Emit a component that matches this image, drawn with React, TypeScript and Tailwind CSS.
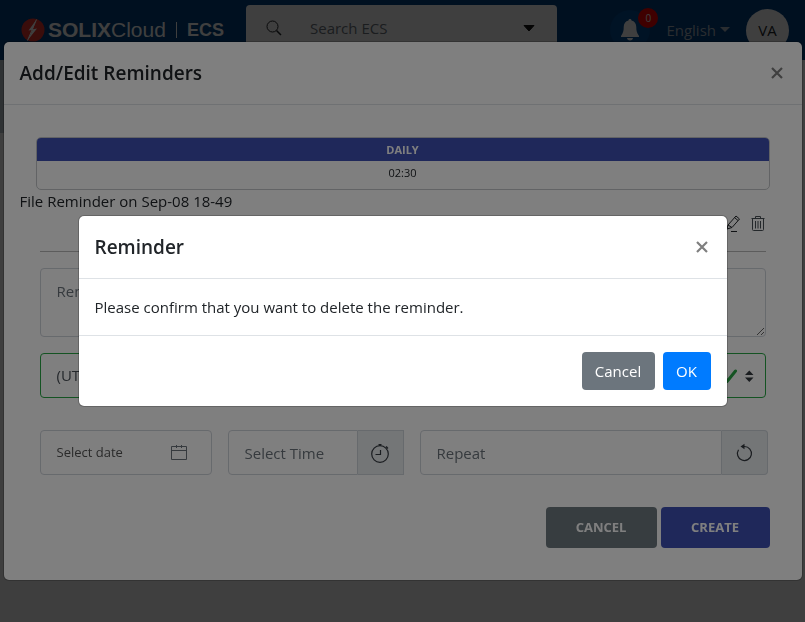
import { useState } from 'react';

const font = "font-['Open_Sans','Noto_Sans',sans-serif]";

function Header() {
  return (
    <header className="flex h-[60px] items-center bg-[#004080] text-white">
      <a href="#home" className="ml-[21px] flex w-[225px] shrink-0 items-center font-['Liberation_Sans',Arial,sans-serif]">
        <svg className="size-6" viewBox="0 0 24 24" aria-hidden="true">
          <circle cx="12" cy="12" r="11.5" fill="#e8342c" />
          <path d="M15.500 1.500 7.500 12.500l4-.6L6.500 22.500l9.500-12-4.200.8z" fill="#fff" />
          <path d="M15.500 1.500 6.500 22.500" stroke="#fff" strokeWidth="1" />
        </svg>
        <span className="ml-[3px] text-[21px] font-bold">SOLIX</span>
        <span className="text-[21px]">Cloud</span>
        <span className="mx-2.5 h-4 w-px bg-white" />
        <span className="text-lg font-bold">ECS</span>
      </a>
      <div className="flex h-[50px] w-[311px] shrink-0 items-center rounded bg-white px-5 pb-1 text-[#495057]">
        <svg className="size-4" viewBox="0 0 16 16" fill="none" stroke="#212529" aria-hidden="true">
          <circle cx="6.500" cy="6.500" r="5.500" />
          <path d="m10.500 10.500 4.500 4.500" strokeWidth="1.500" />
        </svg>
        <input
          type="text"
          aria-label="Search ECS"
          placeholder="Search ECS"
          className="ml-7 min-w-0 flex-1 text-[15px] outline-none placeholder:text-[#6c757d]"
        />
        <button type="button" aria-label="Search options">
          <svg className="h-2 w-4" viewBox="0 0 16 8" aria-hidden="true">
            <path d="M3 1.500h10L8 7z" fill="#111" stroke="#111" strokeLinejoin="round" />
          </svg>
        </button>
      </div>
      <div className="ml-auto flex shrink-0 items-center pr-4">
        <button type="button" aria-label="Notifications" className="relative flex size-10 items-center justify-center rounded-full bg-[#004c94]">
          <svg className="size-6" viewBox="0 0 24 24" fill="#fff" aria-hidden="true">
            <path d="M12 1c-.9 0-1.500.6-1.500 1.400C7.500 3 5.700 5.500 5.700 9c0 3-.2 5.500-2.700 9v1h18v-1c-2.500-3.500-2.700-6-2.700-9 0-3.500-1.800-6-4.800-6.600C13.500 1.600 12.900 1 12 1zM9 20c.4 1.800 1.500 2.500 3 2.500s2.600-.7 3-2.500z" />
          </svg>
          <span className="absolute -top-0.5 -right-2 flex size-5 items-center justify-center rounded-full bg-[#ff0000] text-[10px]">0</span>
        </button>
        <button type="button" className="ml-4 flex items-center gap-1 text-[15px] text-[#a8b4c0]">
          English
          <svg className="h-1.5 w-2.5" viewBox="0 0 10 6" fill="currentColor" aria-hidden="true">
            <path d="M0 0h10L5 5z" />
          </svg>
        </button>
        <button type="button" className="ml-4 size-[43px] rounded-full bg-white text-[15px] text-[#212529]">VA</button>
      </div>
    </header>
  );
}

function Backdrop({ children }: { children: React.ReactNode }) {
  return <div className="fixed inset-0 flex items-center justify-center bg-black/50">{children}</div>;
}

function DialogHeader({ id, title }: { id: string; title: string }) {
  return (
    <div className="flex items-center justify-between border-b border-[#dee2e6] p-4">
      <h2 id={id} className="text-[19px] leading-[30px] font-semibold">{title}</h2>
      <button type="button" aria-label={`Close ${title}`} className="flex w-[18px] justify-center text-[#7f7f7f]">
        <svg className="size-3" viewBox="0 0 12 12" fill="none" stroke="currentColor" strokeWidth="2.200" aria-hidden="true">
          <path d="m1 1 10 10M11 1 1 11" />
        </svg>
      </button>
    </div>
  );
}

const field = 'h-[45px] min-w-0 border border-[#ced4da] bg-white px-4 text-[15px] outline-none placeholder:text-[#6c757d]';
const addon = 'flex w-[46px] shrink-0 items-center justify-center border border-l-0 border-[#ced4da] bg-[#e9ecef]';

function RemindersDialog() {
  return (
    <div
      role="dialog"
      aria-labelledby="reminders-title"
      className="w-full max-w-[800px] rounded-md border border-black/20 bg-white bg-clip-padding"
    >
      <DialogHeader id="reminders-title" title="Add/Edit Reminders" />
      <div className="px-4 pt-8 pb-8">
        <div className="mx-4 overflow-hidden rounded-[5px] border border-[#c4c7ca] text-center text-[11px]">
          <div className="bg-[#3f51b5] leading-[23px] font-bold text-white">DAILY</div>
          <div className="pb-1 leading-6">02:30</div>
        </div>
        <p className="text-[15px] leading-[23px]">File Reminder on Sep-08 18-49</p>
        <div className="mx-5 flex h-[39px] items-start justify-end gap-2 border-b border-[#b8b8b8]">
          <button type="button" aria-label="Edit reminder">
            <svg className="h-5 w-4" viewBox="0 0 16 20" fill="none" stroke="#212529" aria-hidden="true">
              <path d="m2 12 8-9 3.500 3L6 14.500l-5 1.500zM2 12l4 2.500M8.500 4.500l3.500 3M5 18.500h6" />
            </svg>
          </button>
          <button type="button" aria-label="Delete reminder">
            <svg className="h-5 w-4" viewBox="0 0 16 20" fill="none" stroke="#495057" aria-hidden="true">
              <path d="M1.500 5.500h13M5.500 5.500v-2h5v2M2.500 6v10.500q0 1 1 1h9q1 0 1-1V6M5.500 8v7.500M8 8v7.500M10.500 8v7.500" />
            </svg>
          </button>
        </div>
        <div className="px-5 pt-4">
          <textarea
            aria-label="Reminder message"
            placeholder="Reminder message"
            className="block h-[69px] w-full rounded border border-[#ced4da] px-4 py-2.5 text-[15px] leading-6 outline-none placeholder:text-[#6c757d]"
          />
          <div className="relative mt-4">
            <select
              aria-label="Time zone"
              className="h-[45px] w-full appearance-none rounded border border-[#28a745] bg-white px-4 text-[15px] text-[#495057] outline-none"
            >
              <option>(UTC) Coordinated Universal Time</option>
            </select>
            <svg className="pointer-events-none absolute top-4 right-3 h-3.5 w-9" viewBox="0 0 36 14" fill="none" aria-hidden="true">
              <path d="m6 8 3.500 4L17.500 2" stroke="#28a745" strokeWidth="3" strokeLinecap="round" />
              <path d="M27 6h8.500l-4.200-4.500zM27 8.500h8.500L31.300 13z" fill="#343a40" />
            </svg>
          </div>
        </div>
        <div className="mt-8 mr-[18px] ml-5 grid grid-cols-[minmax(0,172fr)_minmax(0,176fr)_minmax(0,348fr)] gap-4">
          <div className={`${field} flex items-center rounded`}>
            <input aria-label="Select date" placeholder="Select date" className="min-w-0 flex-1 text-[13px] outline-none placeholder:text-[#555]" />
            <svg className="mr-2 size-4" viewBox="0 0 16 16" fill="none" stroke="#6c757d" aria-hidden="true">
              <path d="M.5 1.500h15v13H.5zM.5 5.500h15M5.500 0v3M10.500 0v3" />
            </svg>
          </div>
          <div className="flex">
            <input aria-label="Select Time" placeholder="Select Time" className={`${field} flex-1 rounded-l`} />
            <button type="button" aria-label="Open time picker" className={addon}>
              <svg className="size-5" viewBox="0 0 20 20" fill="none" stroke="#343a40" strokeWidth="1.200" aria-hidden="true">
                <circle cx="10" cy="11" r="8.300" />
                <path d="M10.500 7v4.500H5.500M8.500 1.500h3M10 1v2M16 3.500l2 2M16.500 5l1-1" />
              </svg>
            </button>
          </div>
          <div className="flex">
            <input aria-label="Repeat" placeholder="Repeat" className={`${field} flex-1 rounded-l`} />
            <button type="button" aria-label="Reset repeat" className={`${addon} rounded-r`}>
              <svg className="size-5" viewBox="0 0 20 20" fill="none" stroke="#343a40" strokeWidth="1.200" aria-hidden="true">
                <path d="M4.500 6.800A7 7 0 1 0 10.500 3.500H9" />
                <path d="m6.500 3.500 4-2.700v5.400z" fill="#343a40" stroke="none" />
              </svg>
            </button>
          </div>
        </div>
        <div className="mt-8 mr-4 flex justify-end gap-1 text-[13px] font-bold text-white">
          <button type="button" className="h-[41px] w-[111px] rounded bg-[#6e7a80]">CANCEL</button>
          <button type="button" className="h-[41px] w-[109px] rounded bg-[#3f51b5]">CREATE</button>
        </div>
      </div>
    </div>
  );
}

function ConfirmDialog({ onClose }: { onClose: () => void }) {
  return (
    <div
      role="alertdialog"
      aria-labelledby="confirm-title"
      className="w-full max-w-[650px] rounded-md border border-black/20 bg-white bg-clip-padding"
    >
      <DialogHeader id="confirm-title" title="Reminder" />
      <p className="p-4 text-[15px] leading-6">Please confirm that you want to delete the reminder.</p>
      <div className="flex justify-end gap-2 border-t border-[#dee2e6] p-4 text-[15px] text-white">
        <button type="button" onClick={onClose} className="h-[38px] w-[73px] rounded bg-[#6c757d]">Cancel</button>
        <button type="button" onClick={onClose} className="h-[38px] w-12 rounded bg-[#007bff]">OK</button>
      </div>
    </div>
  );
}

export default function App() {
  const [confirming, setConfirming] = useState(true);
  return (
    <div className={`flex min-h-screen flex-col bg-white text-[#212529] ${font}`}>
      <Header />
      <main className="flex flex-1">
        <aside className="w-[90px] bg-[#f8f8f8]">
          <div className="h-[73px] bg-[#b8c4cc]" />
        </aside>
      </main>
      <Backdrop>
        <RemindersDialog />
      </Backdrop>
      {confirming && (
        <Backdrop>
          <ConfirmDialog onClose={() => setConfirming(false)} />
        </Backdrop>
      )}
    </div>
  );
}
